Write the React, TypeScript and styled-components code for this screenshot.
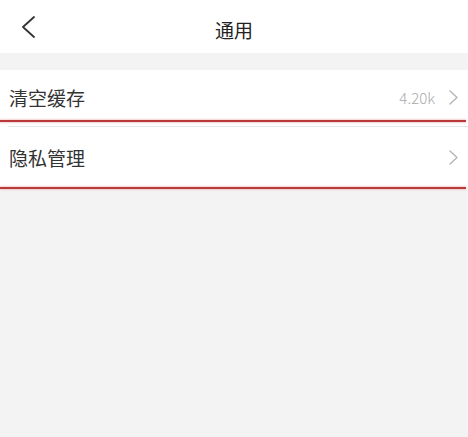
import React from 'react';
import styled, { createGlobalStyle } from 'styled-components';

const GlobalStyle = createGlobalStyle`
	html, body {
		margin: 0;
		padding: 0;
		background: #f3f3f3;
		font-family: "Noto Sans CJK SC", "Noto Sans", sans-serif;
	}
`;

const Page = styled.div`
	width: 468px;
	min-height: 437px;
	background: #f3f3f3;
`;

const Header = styled.header`
	height: 53px;
	background: #fff;
	display: grid;
	grid-template-columns: 1fr auto 1fr;
	align-items: center;
`;

const BackButton = styled.div`
	display: flex;
	align-items: center;
	padding-left: 22px;
	height: 100%;
`;

const Title = styled.div`
	font-size: 19px;
	color: #222;
	line-height: 1;
	margin-top: 6px;
`;

const Section = styled.div`
	margin-top: 17px;
	background: #fff;
`;

const Row = styled.div<{ $h: number; $top?: number }>`
	height: ${(p) => p.$h}px;
	padding-top: ${(p) => p.$top ?? 0}px;
	box-sizing: border-box;
	display: flex;
	align-items: center;
	justify-content: space-between;
	padding-left: 9px;
	padding-right: 10px;
	background: #fff;
`;

const Label = styled.span`
	font-size: 19px;
	color: #333;
`;

const Right = styled.div`
	display: flex;
	align-items: center;
	gap: 14px;
`;

const Value = styled.span`
	font-size: 15px;
	color: #aaa;
	font-weight: 300;
`;

const Highlight = styled.div`
	height: 2px;
	background: #b93a3a;
	box-shadow: 0 1px 2px rgba(220, 120, 120, 0.35), 0 -1px 2px rgba(220, 120, 120, 0.35);
	margin-right: 2px;
`;

const Divider = styled.div`
	height: 1px;
	margin: 4px 0 0 8px;
	background: #e6e6ec;
`;

const Chevron: React.FC<{ w: number; h: number; color: string; sw: number }> = ({ w, h, color, sw }) => (
	<svg width={w} height={h} viewBox={`0 0 ${w} ${h}`} fill="none">
		<polyline
			points={`${w - 1},1 1,${h / 2} ${w - 1},${h - 1}`}
			stroke={color}
			strokeWidth={sw}
			strokeLinecap="round"
			strokeLinejoin="round"
		/>
	</svg>
);

const Arrow: React.FC = () => (
	<svg width="9" height="15" viewBox="0 0 9 15" fill="none">
		<polyline points="1,1 8,7.5 1,14" stroke="#b5b5b5" strokeWidth="1.4" strokeLinecap="round" strokeLinejoin="round" />
	</svg>
);

const App: React.FC = () => {
	return (
		<Page>
			<GlobalStyle />
			<Header>
				<BackButton>
					<Chevron w={13} h={22} color="#333" sw={1.8} />
				</BackButton>
				<Title>通用</Title>
				<div />
			</Header>
			<Section>
				<Row $h={50} $top={4}>
					<Label>清空缓存</Label>
					<Right>
						<Value>4.20k</Value>
						<Arrow />
					</Right>
				</Row>
				<Highlight />
				<Divider />
				<Row $h={60} $top={0}>
					<Label>隐私管理</Label>
					<Right>
						<Arrow />
					</Right>
				</Row>
			</Section>
			<Highlight />
		</Page>
	);
};

export default App;
